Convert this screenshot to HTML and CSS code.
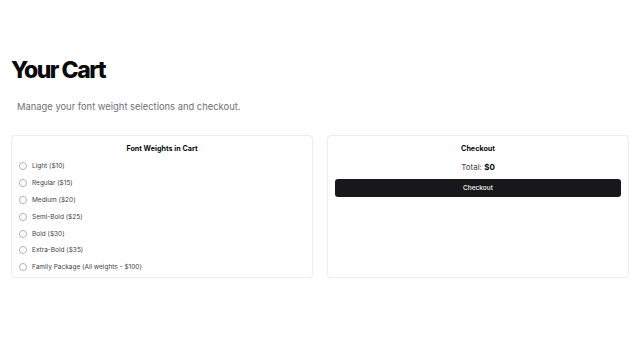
FILE: index.html
```html
<!DOCTYPE html>
<html lang="en">
<head>
<meta charset="utf-8">
<title>Your Cart</title>
<link rel="stylesheet" href="styles.css">
</head>
<body>
<main class="page">
  <h1 class="title">Your Cart</h1>
  <p class="subtitle">Manage your font weight selections and checkout.</p>
  <div class="grid">
    <section class="card">
      <h2 class="card-title">Font Weights in Cart</h2>
      <ul class="options">
        <li class="option"><span class="radio"></span><span>Light ($10)</span></li>
        <li class="option"><span class="radio"></span><span>Regular ($15)</span></li>
        <li class="option"><span class="radio"></span><span>Medium ($20)</span></li>
        <li class="option"><span class="radio"></span><span>Semi-Bold ($25)</span></li>
        <li class="option"><span class="radio"></span><span>Bold ($30)</span></li>
        <li class="option"><span class="radio"></span><span>Extra-Bold ($35)</span></li>
        <li class="option"><span class="radio"></span><span>Family Package (All weights - $100)</span></li>
      </ul>
    </section>
    <section class="card">
      <h2 class="card-title">Checkout</h2>
      <p class="total">Total: <strong>$0</strong></p>
      <button class="btn" type="button">Checkout</button>
    </section>
  </div>
</main>
</body>
</html>
```

FILE: styles.css
```css
* { box-sizing: border-box; }
html, body { margin: 0; padding: 0; background: #fff; }
body {
  font-family: Inter, "Noto Sans", sans-serif;
  color: #0a0a0a;
}
.page {
  padding: 56px 11px 0 11px;
}
.title {
  margin: 0;
  font-size: 23px;
  line-height: 28px;
  font-weight: 800;
  letter-spacing: -0.065em;
}
.subtitle {
  margin: 16px 0 0 6px;
  font-size: 9.4px;
  line-height: 14px;
  color: #71717a;
}
.grid {
  margin-top: 21px;
  display: grid;
  grid-template-columns: 1fr 1fr;
  gap: 14px;
}
.card {
  border: 1px solid #ececef;
  border-radius: 4px;
  padding: 8px 7px 6px;
  height: 143px;
}
.card-title {
  margin: 0;
  text-align: center;
  font-size: 7.2px;
  line-height: 10px;
  font-weight: 700;
}
.options {
  list-style: none;
  margin: 4px 0 0;
  padding: 0;
}
.option {
  display: flex;
  align-items: center;
  gap: 5px;
  height: 16.8px;
  font-size: 6.5px;
  font-weight: 400;
  color: #3f3f46;
}
.radio {
  width: 8px;
  height: 8px;
  border: 1px solid #b4b4bb;
  border-radius: 50%;
}
.total {
  margin: 8px 0 0;
  text-align: center;
  font-size: 8px;
  line-height: 11px;
  color: #3f3f46;
}
.total strong { color: #0a0a0a; font-weight: 700; }
.btn {
  display: block;
  width: 100%;
  margin-top: 6px;
  height: 18px;
  border: none;
  border-radius: 3px;
  background: #18181b;
  color: #fafafa;
  font-family: inherit;
  font-size: 6.5px;
  font-weight: 500;
}
```
